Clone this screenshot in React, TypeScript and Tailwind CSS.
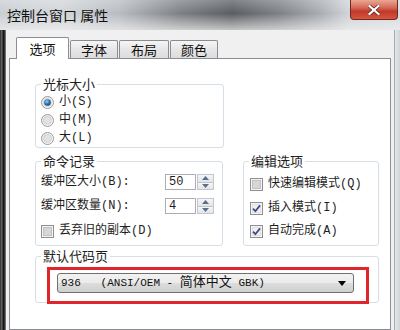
import * as React from 'react';

const uiFont = '"Liberation Mono", "Noto Sans CJK SC", monospace';
const cjkFont = '"Noto Sans CJK SC", "Liberation Sans", sans-serif';

function Radio({ checked }: { checked?: boolean }) {
  return (
    <svg width="13" height="13" viewBox="0 0 13 13" className="shrink-0">
      <defs>
        <linearGradient id="rOuter" x1="0" y1="0" x2="1" y2="1">
          <stop offset="0" stopColor="#e6e6e6" />
          <stop offset="1" stopColor="#ffffff" />
        </linearGradient>
        <radialGradient id="rDot" cx="0.4" cy="0.35" r="0.7">
          <stop offset="0" stopColor="#9fd3f5" />
          <stop offset="0.5" stopColor="#2f7cc4" />
          <stop offset="1" stopColor="#123f6e" />
        </radialGradient>
      </defs>
      <circle cx="6.5" cy="6.5" r="6" fill="url(#rOuter)" stroke="#9a9a9a" />
      <circle cx="6.5" cy="6.5" r="4" fill="#e2e2e2" stroke="#c4c4c4" strokeWidth="0.6" />
      {checked && <circle cx="6.5" cy="6.5" r="3.3" fill="url(#rDot)" />}
    </svg>
  );
}

function Check({ checked }: { checked?: boolean }) {
  return (
    <svg width="13" height="13" viewBox="0 0 13 13" className="shrink-0">
      <rect x="0.5" y="0.5" width="12" height="12" fill="#f4f4f4" stroke="#8f8f8f" />
      <rect x="2.5" y="2.5" width="8" height="8" fill={checked ? '#f0f0f0' : '#d6d6d6'} stroke={checked ? '#e0e0e0' : '#c2c2c2'} />
      {checked && (
        <path d="M3 6.6 L5.4 9.2 L10 3.4" fill="none" stroke="#3b4f86" strokeWidth="1.8" />
      )}
    </svg>
  );
}

function Spinner({ value }: { value: string }) {
  return (
    <div className="flex h-[16px]">
      <div className="w-[31px] h-full bg-white border border-[#abadb3] text-[12px] leading-[14px] pl-[3px]" style={{ fontFamily: uiFont }}>
        {value}
      </div>
      <div className="w-[17px] h-full flex flex-col border border-[#c3c6cc] ml-[1px]">
        <div className="flex-1 flex items-center justify-center bg-[linear-gradient(to_bottom,#f6f6f6,#e2e4e7)] border-b border-[#c3c6cc]">
          <svg width="7" height="4" viewBox="0 0 7 4"><path d="M0 4 L3.5 0 L7 4 Z" fill="#5b6e8f" /></svg>
        </div>
        <div className="flex-1 flex items-center justify-center bg-[linear-gradient(to_bottom,#f6f6f6,#e2e4e7)]">
          <svg width="7" height="4" viewBox="0 0 7 4"><path d="M0 0 L3.5 4 L7 0 Z" fill="#5b6e8f" /></svg>
        </div>
      </div>
    </div>
  );
}

function Group({ title, className, children }: { title: string; className?: string; children: React.ReactNode }) {
  return (
    <fieldset className={`border border-[#d5dfe5] rounded-[3px] ${className ?? ''}`}>
      <legend className="ml-[5px] px-[2px] text-[13px] leading-[14px] text-[#1e1e1e]" style={{ fontFamily: cjkFont }}>
        {title}
      </legend>
      {children}
    </fieldset>
  );
}

// option row: control + label
function Row({ children, className }: { children: React.ReactNode; className?: string }) {
  return (
    <div className={`flex items-center gap-[5px] text-[12px] text-[#1e1e1e] ${className ?? ''}`} style={{ fontFamily: uiFont }}>
      {children}
    </div>
  );
}

// label + spinner row, no gap
function FieldRow({ label, value, className }: { label: string; value: string; className?: string }) {
  return (
    <div className={`flex items-center h-[16px] text-[12px] text-[#1e1e1e] ${className ?? ''}`} style={{ fontFamily: uiFont }}>
      <span className="w-[124px] shrink-0">{label}</span>
      <Spinner value={value} />
    </div>
  );
}

export default function App() {
  const tabs = ['字体', '布局', '颜色'];
  return (
    <div className="relative w-[400px] h-[330px] overflow-hidden flex flex-col bg-[#f0f0f0]">
      {/* Aero title bar */}
      <div className="relative h-[30px] shrink-0 bg-[linear-gradient(to_bottom,rgba(255,255,255,0.25),rgba(255,255,255,0)_45%,rgba(240,240,240,0.7)),linear-gradient(to_right,#c9ced3,#d2d6da_15%,#b8bcc0_30%,#7d8084_45%,#5a5d61_58%,#7e8185_70%,#a9adb1_80%,#cfd3d7_87%,#d8dce0)]">
        <div className="absolute left-[7px] top-[6px] text-[14px] leading-[18px] text-[#111]" style={{ fontFamily: cjkFont }}>
          控制台窗口 属性
        </div>
        <div className="absolute right-[2px] top-0 w-[48px] h-[20px] rounded-b-[4px] border border-t-0 border-[#6e2a22] bg-[linear-gradient(to_bottom,#e9a795,#d56a55_40%,#c0392b_60%,#d9553c)] flex items-center justify-center">
          <svg width="12" height="10" viewBox="0 0 12 10">
            <path d="M1.5 1 L10.5 9 M10.5 1 L1.5 9" stroke="#4a1410" strokeWidth="3.4" strokeLinecap="square" />
            <path d="M1.5 1 L10.5 9 M10.5 1 L1.5 9" stroke="#ffffff" strokeWidth="2.2" strokeLinecap="square" />
          </svg>
        </div>
      </div>

      <div className="flex flex-1 min-h-0">
        {/* left frame */}
        <div className="w-[6px] shrink-0 bg-[linear-gradient(to_right,#2a2a2a,#6b6b6b_30%,#111_55%,#3a3a3a_80%,#9a9a9a)]" />

        <div className="flex-1 flex flex-col pt-[6px] pl-[3px] pr-[3px]">
          {/* tabs */}
          <div className="flex items-end h-[22px] pl-[7px]" style={{ fontFamily: cjkFont }}>
            <div className="relative z-10 w-[53px] h-[22px] -mb-px bg-white border border-b-0 border-[#898c95] rounded-t-[2px] flex items-center justify-center text-[13px] text-[#111]">
              选项
            </div>
            {tabs.map((t, i) => (
              <div
                key={t}
                className={`h-[18px] ${i === 1 ? 'w-[50px]' : 'w-[48px]'} ml-[1px] border border-b-0 border-[#898c95] rounded-t-[2px] bg-[linear-gradient(to_bottom,#f5f5f5,#e6e6e6_50%,#dcdcdc)] flex items-center justify-center text-[13px] text-[#111]`}
              >
                {t}
              </div>
            ))}
          </div>

          {/* tab panel */}
          <div className="flex-1 bg-white border border-[#898c95] pl-[25px] pt-[18px]">
            <Group title="光标大小" className="w-[189px] h-[71px]">
              <div className="pt-[2px] pl-[5px]">
                <Row className="h-[18px]"><Radio checked />小(S)</Row>
                <Row className="h-[18px]"><Radio />中(M)</Row>
                <Row className="h-[18px]"><Radio />大(L)</Row>
              </div>
            </Group>

            <div className="flex gap-[20px] mt-[6px]">
              <Group title="命令记录" className="w-[188px] h-[92px]">
                <div className="pl-[5px] pt-[6px]">
                  <FieldRow label="缓冲区大小(B):" value="50" />
                  <FieldRow label="缓冲区数量(N):" value="4" className="mt-[8px]" />
                  <Row className="h-[16px] mt-[9px]"><Check />丢弃旧的副本(D)</Row>
                </div>
              </Group>

              <Group title="编辑选项" className="w-[136px] h-[92px]">
                <div className="pl-[6px] pt-[8px]">
                  <Row className="h-[16px]"><Check />快速编辑模式(Q)</Row>
                  <Row className="h-[16px] mt-[8px]"><Check checked />插入模式(I)</Row>
                  <Row className="h-[16px] mt-[7px]"><Check checked />自动完成(A)</Row>
                </div>
              </Group>
            </div>

            <Group title="默认代码页" className="w-[344px] h-[54px] mt-[3px]">
              <div className="pl-[21px] pt-[10px]">
                <div className="w-[297px] h-[20px] rounded-[3px] border border-[#707070] bg-[linear-gradient(to_bottom,#f2f2f2,#ebebeb_50%,#dddddd_51%,#cfcfcf)] flex items-center pl-[3px] pr-[7px]">
                  <span className="flex-1 whitespace-pre text-[11px] leading-[14px] text-[#111]" style={{ fontFamily: uiFont }}>
                    936   (ANSI/OEM - <span className="text-[13px]">简体中文</span> GBK)
                  </span>
                  <svg width="8" height="5" viewBox="0 0 8 5"><path d="M0 0 L8 0 L4 5 Z" fill="#000" /></svg>
                </div>
              </div>
            </Group>
          </div>
        </div>

        {/* right frame */}
        <div className="w-[6px] shrink-0 border-l border-[#a7a9ad] bg-[linear-gradient(to_right,#e4e7ea,#cfd3d7)]" />
      </div>

      {/* red annotation */}
      <div className="absolute left-[47px] top-[267px] w-[322px] h-[37px] border-[3px] border-[#e2242d]" />
    </div>
  );
}
